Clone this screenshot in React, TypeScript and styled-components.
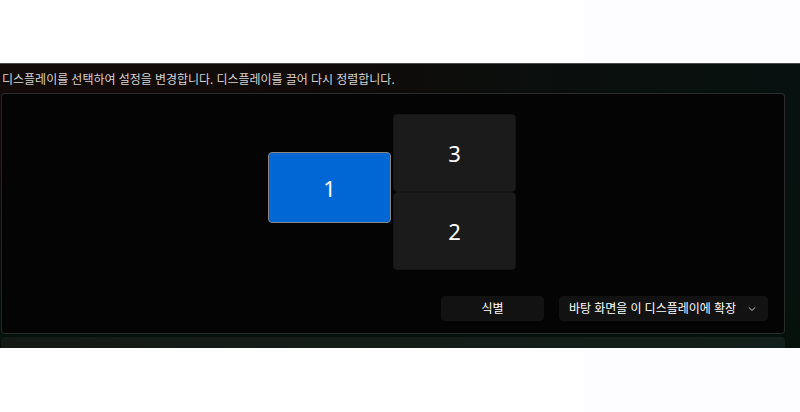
import { useState } from "react";
import styled, { createGlobalStyle } from "styled-components";

const color = {
  text: "#d6d3d2",
  white: "#ffffff",
  accent: "#0067d4",
  panel: "#040404",
  tile: "#1b1b1b",
  control: "#121212",
};

const fontFamily = `"Noto Sans", "Noto Sans CJK KR", sans-serif`;

const GlobalStyle = createGlobalStyle`
  * {
    box-sizing: border-box;
    margin: 0;
    padding: 0;
    font-family: ${fontFamily};
  }

  body {
    background: linear-gradient(90deg, #ffffff 73%, #fdfdff 73%);
  }
`;

const Page = styled.main`
  min-height: 100vh;
  padding: 63px 0;
`;

const Settings = styled.section`
  display: flex;
  flex-direction: column;
  padding: 7px 15px 0 1px;
  border-top: 1px solid #4a4a4a;
  background:
    linear-gradient(180deg, rgba(6, 17, 12, 0) 30%, #06110c 100%),
    linear-gradient(90deg, #130b0a 0%, #100b0a 40%, #0a0f0d 70%, #08110f 100%);
`;

const Description = styled.h1`
  margin-bottom: 4px;
  padding-left: 1px;
  color: ${color.text};
  font-size: 12px;
  font-weight: 400;
  line-height: 18px;
`;

const Panel = styled.div`
  display: flex;
  flex-direction: column;
  gap: 26px;
  padding: 20px 16px 12px 14px;
  border: 1px solid #2a2c2b;
  border-left-color: #2a211f;
  border-radius: 4px;
  background-color: ${color.panel};
`;

const Arrangement = styled.div`
  display: flex;
  justify-content: center;
  align-items: flex-start;
  gap: 2px;
`;

const DisplayColumn = styled.div<{ $offset?: number }>`
  display: flex;
  flex-direction: column;
  padding-top: ${(props) => props.$offset ?? 0}px;
`;

const DisplayTile = styled.button<{ $selected: boolean; $height: number }>`
  width: 123px;
  height: ${(props) => props.$height}px;
  border: 1px solid ${(props) => (props.$selected ? "#8a8580" : "#141414")};
  border-radius: 4px;
  background-color: ${(props) => (props.$selected ? color.accent : color.tile)};
  color: ${color.white};
  font-size: 22px;
  line-height: 30px;
  text-align: center;
`;

const Actions = styled.div`
  display: flex;
  justify-content: flex-end;
  gap: 15px;
`;

const IdentifyButton = styled.button`
  width: 103px;
  height: 25px;
  border: 0;
  border-radius: 4px;
  background-color: ${color.control};
  color: ${color.white};
  font-size: 12px;
  line-height: 18px;
`;

const SelectBox = styled.label`
  display: grid;
  align-items: center;
  width: 209px;
  height: 25px;
  border-radius: 4px;
  background-color: ${color.control};

  > * {
    grid-area: 1 / 1;
  }
`;

const ModeSelect = styled.select`
  width: 100%;
  height: 25px;
  padding: 0 24px 0 10px;
  border: 0;
  border-radius: 4px;
  appearance: none;
  background: transparent;
  color: ${color.white};
  font-size: 12px;
  line-height: 18px;
`;

const Chevron = styled.svg`
  justify-self: end;
  margin-right: 12px;
  pointer-events: none;
`;

const NextCard = styled.div`
  height: 11px;
  margin-top: 3px;
  border-radius: 4px 4px 0 0;
  background: linear-gradient(90deg, #161a17, #131f1a);
`;

export default function App() {
  const [selected, setSelected] = useState(1);

  const renderDisplay = (id: number, height: number) => (
    <DisplayTile
      key={id}
      type="button"
      $selected={selected === id}
      $height={height}
      aria-pressed={selected === id}
      onClick={() => setSelected(id)}
    >
      {id}
    </DisplayTile>
  );

  return (
    <>
      <GlobalStyle />
      <Page>
        <Settings>
          <Description>
            디스플레이를 선택하여 설정을 변경합니다. 디스플레이를 끌어 다시 정렬합니다.
          </Description>
          <Panel>
            <Arrangement>
              <DisplayColumn $offset={38}>{renderDisplay(1, 71)}</DisplayColumn>
              <DisplayColumn>
                {renderDisplay(3, 78)}
                {renderDisplay(2, 78)}
              </DisplayColumn>
            </Arrangement>
            <Actions>
              <IdentifyButton type="button">식별</IdentifyButton>
              <SelectBox>
                <ModeSelect aria-label="다중 디스플레이">
                  <option>바탕 화면을 이 디스플레이에 확장</option>
                </ModeSelect>
                <Chevron width="8" height="8" viewBox="0 0 8 8" fill="none" aria-hidden="true">
                  <path d="M1 2.6 4 5.4 7 2.6" stroke="#c8c8c8" strokeLinecap="round" strokeLinejoin="round" />
                </Chevron>
              </SelectBox>
            </Actions>
          </Panel>
          <NextCard />
        </Settings>
      </Page>
    </>
  );
}
